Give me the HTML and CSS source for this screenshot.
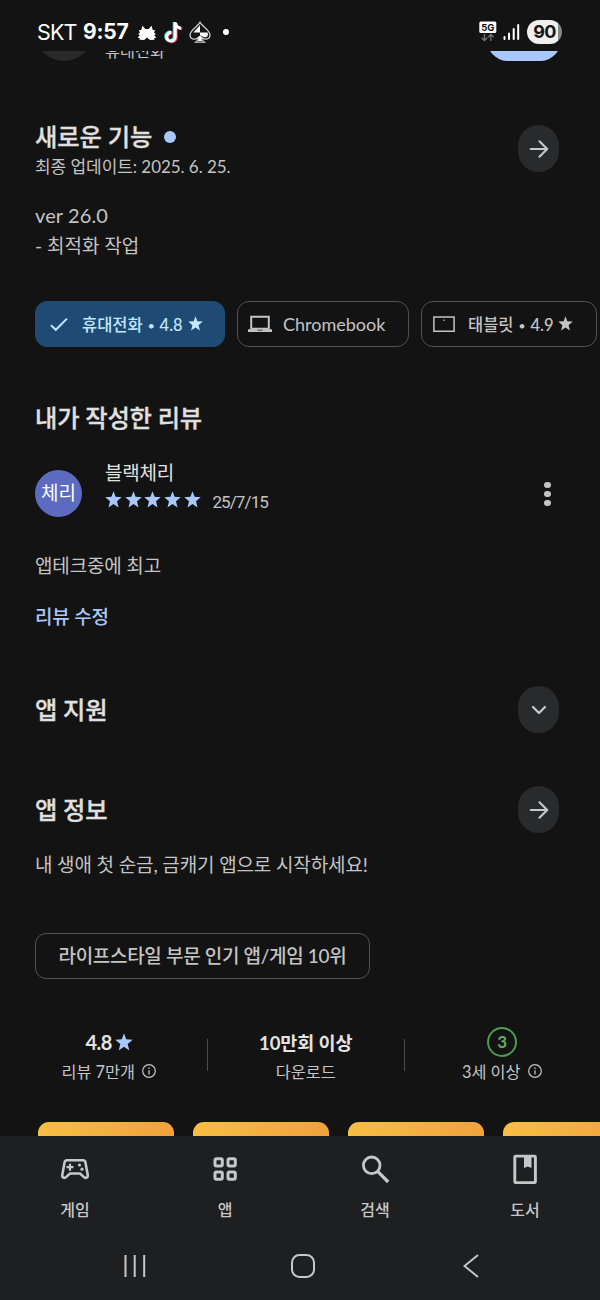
FILE: index.html
```html
<!DOCTYPE html>
<html lang="ko">
<head>
<meta charset="utf-8">
<title>앱 정보</title>
<link rel="stylesheet" href="styles.css">
</head>
<body>
<svg class="defs" width="0" height="0">
  <symbol id="star" viewBox="1 1 22 22"><path d="M12 17.800 18.500 22.300l-2-7.900L22.700 9.200l-8-.6L12 1.300 9.300 8.600l-8 .6 6.200 5.200-2 7.900z"/></symbol>
  <symbol id="arrow" viewBox="0 0 24 24"><path d="M3 12H20.500M12.500 3.600 21 12l-8.500 8.400"/></symbol>
  <symbol id="info" viewBox="0 0 16 16"><circle cx="8" cy="8" r="6.300" fill="none" stroke="currentColor" stroke-width="1.200"/><path d="M7.350 7.200h1.300v4.300h-1.300zM7.350 4.600h1.300V6h-1.300z" fill="currentColor"/></symbol>
</svg>
<header class="status">
  <span class="carrier">SKT</span>
  <span class="clock">9:57</span>
  <svg class="s-creature" width="20" height="16" viewBox="0 0 20 16"><path fill="#fff" d="M5.500.8 8.300 4h3.400L14.500.8l1.300 4.200 2.400.2-1.200 2.300 1.800 1.500-1.600 1.200 2.200 2.500-2.200.3.300 1.800-4.700.2L10 12.500 7.200 15l-4.700-.2.300-1.800-2.200-.3 2.200-2.500L1.200 9 3 7.500 1.800 5.200 4.200 5z"/></svg>
  <svg class="s-tiktok" width="21" height="23" viewBox="0 0 21 23"><g fill="none" stroke-width="3"><path stroke="#42d9d5" d="M11.200 1v14.300a4.300 4.300 0 1 1-3.800-4.200M11.400 2c.5 3 2.500 4.500 5.500 4.800"/><path stroke="#ef3b5a" d="M13.200 2v14.300a4.300 4.300 0 1 1-3.800-4.200M13.400 3c.5 3 2.500 4.500 5.800 4.800"/><path stroke="#fff" d="M12.200 1.200v14.500a4.300 4.300 0 1 1-3.900-4.200M12.300 2.300c.5 3 2.500 4.500 5.700 4.900"/></g></svg>
  <svg class="s-spade" width="22" height="23" viewBox="0 0 22 23"><path fill="#151515" stroke="#ccc" stroke-width="1.300" d="M11 1.200C9.300 5 1 8.900 1 14c0 4.500 5.800 5.500 8.600 2.300-.1 2.200-1.100 3.700-2.900 4.900h8.600c-1.800-1.200-2.800-2.700-2.900-4.900C15.200 19.500 21 18.500 21 14c0-5.100-8.300-9-10-12.800z"/><path fill="#fff" d="M11 4v7.500H4.500C6.500 8.500 9.500 6.500 11 4zM11 11.500h7.500c2 4-2.500 6.500-5.500 3.500l-2-.5zM10.300 15h1.400l1.200 5H9.100z"/></svg>
  <span class="s-dot"></span>
  <svg class="s-net" width="18" height="21" viewBox="0 0 18 21"><rect x=".3" y=".5" width="17" height="11.500" rx="1.500" fill="#fff"/><text class="net-label" x="8.800" y="10" text-anchor="middle">5G</text><path fill="none" stroke="#777" stroke-width="1.300" d="M5.500 13v6.500m-2.800-2.700 2.800 2.800 2.800-2.800M11.800 20v-6.500M9 16.200l2.800-2.800 2.800 2.800"/></svg>
  <svg class="s-signal" width="17" height="18" viewBox="0 0 17 18"><path stroke="#fff" stroke-width="2" stroke-linecap="round" d="M1.500 14v2M6 10.500V16M10.700 6v10M15.200 2v14"/></svg>
  <span class="battery">90</span>
</header>

<main>
  <div class="peek"><span class="peek-icon"></span><span class="peek-text">휴대전화</span><span class="peek-btn"></span></div>

  <section class="head news">
    <div>
      <h2>새로운 기능<i class="new-dot"></i></h2>
      <p class="updated">최종 업데이트: 2025. 6. 25.</p>
    </div>
    <span class="pill"><svg class="go" width="22" height="22"><use href="#arrow"/></svg></span>
  </section>
  <p class="notes"><span class="ver">ver 26.0</span><br>- 최적화 작업</p>

  <div class="chips">
    <span class="chip on"><svg width="20" height="20" viewBox="0 0 20 20"><path d="M2 11.200 6.800 15.800 18 4.600" fill="none" stroke="currentColor" stroke-width="2"/></svg><span class="t-phone">휴대전화 <span class="bul">•</span> 4.8</span><svg class="cs" width="15" height="15"><use href="#star"/></svg></span>
    <span class="chip cb"><svg width="24" height="20" viewBox="0 0 24 20"><path fill="none" stroke="currentColor" stroke-width="2" d="M3.200 2.800h17.600v12H3.200z"/><path fill="currentColor" d="M0 15.300h9l.7 1.200h4.600l.7-1.200h9v2.700H0z"/></svg><span class="t-cb">Chromebook</span></span>
    <span class="chip tb"><svg width="22" height="20" viewBox="0 0 22 20"><path fill="none" stroke="currentColor" stroke-width="1.500" d="M.9 3h20.200v14.200H.9z"/><circle cx="11" cy="6.300" r=".8" fill="currentColor"/></svg><span class="t-tb">태블릿 <span class="bul">•</span> 4.9</span><svg class="cs" width="15" height="15"><use href="#star"/></svg></span>
  </div>

  <h2 class="mine">내가 작성한 리뷰</h2>
  <div class="reviewer">
    <span class="avatar">체리</span>
    <div class="who">
      <p class="name">블랙체리</p>
      <div class="rate"><svg><use href="#star"/></svg><svg><use href="#star"/></svg><svg><use href="#star"/></svg><svg><use href="#star"/></svg><svg><use href="#star"/></svg><span>25/7/15</span></div>
    </div>
    <span class="more"><i></i><i></i><i></i></span>
  </div>
  <p class="comment">앱테크중에 최고</p>
  <p class="edit">리뷰 수정</p>

  <section class="head support"><h2>앱 지원</h2><span class="pill"><svg class="go" width="16" height="16" viewBox="0 0 16 16"><path d="M2 5l6 6 6-6"/></svg></span></section>
  <section class="head about"><h2>앱 정보</h2><span class="pill"><svg class="go" width="22" height="22"><use href="#arrow"/></svg></span></section>
  <p class="desc">내 생애 첫 순금, 금캐기 앱으로 시작하세요!</p>
  <span class="tag">라이프스타일 부문 인기 앱/게임 10위</span>

  <div class="stats">
    <div class="stat"><b class="score">4.8<svg class="bs" width="18" height="18"><use href="#star"/></svg></b><span>리뷰 7만개<svg class="info"><use href="#info"/></svg></span></div>
    <i class="sep"></i>
    <div class="stat"><b class="dl">10만회 이상</b><span>다운로드</span></div>
    <i class="sep"></i>
    <div class="stat"><b><em class="age">3</em></b><span>3세 이상<svg class="info"><use href="#info"/></svg></span></div>
  </div>
  <div class="shots"><i></i><i></i><i></i><i></i></div>
</main>

<footer>
  <nav class="tabs">
    <span><svg width="30" height="30" viewBox="0 0 30 30"><path fill="none" stroke="currentColor" stroke-width="2.600" stroke-linejoin="round" d="M7 6.200h16q2 0 2.400 2l2.300 12.500c.5 3-2.200 4.200-4 2.200L20 19.500H10l-3.700 3.400c-1.800 2-4.500.8-4-2.200L4.600 8.200q.4-2 2.400-2z"/><path stroke="currentColor" stroke-width="2.200" d="M10 9.700v7M6.500 13.200h7"/><g fill="currentColor"><circle cx="19.500" cy="11" r="1.600"/><circle cx="22" cy="15.200" r="1.600"/></g></svg>게임</span>
    <span><svg width="30" height="30" viewBox="0 0 30 30"><g fill="none" stroke="currentColor" stroke-width="3"><rect x="5" y="4.700" width="7.300" height="7.300" rx="1.500"/><rect x="18" y="4.700" width="7.300" height="7.300" rx="1.500"/><rect x="5" y="18" width="7.300" height="7.300" rx="1.500"/><rect x="18" y="18" width="7.300" height="7.300" rx="1.500"/></g></svg>앱</span>
    <span><svg width="30" height="30" viewBox="0 0 30 30"><circle cx="11.700" cy="11.300" r="8.300" fill="none" stroke="currentColor" stroke-width="2.800"/><path stroke="currentColor" stroke-width="3.200" d="M17.400 17.200 28.200 28"/></svg>검색</span>
    <span><svg width="30" height="30" viewBox="0 0 30 30"><rect x="4.800" y="2.100" width="20.600" height="26.500" rx="1" fill="none" stroke="currentColor" stroke-width="2.900"/><path fill="currentColor" d="M14 2h7.500v12L17.700 12.500 14 14z"/></svg>도서</span>
  </nav>
  <div class="sysnav">
    <span><svg width="26" height="26" viewBox="0 0 26 26"><path stroke="currentColor" stroke-width="2" d="M3.500 2v22M12.700 2v22M22.200 2v22"/></svg></span>
    <span><svg width="26" height="26" viewBox="0 0 26 26"><rect x="2" y="2" width="22" height="22" rx="7.500" fill="none" stroke="currentColor" stroke-width="2"/></svg></span>
    <span><svg width="26" height="26" viewBox="0 0 26 26"><path fill="none" stroke="currentColor" stroke-width="1.900" d="M20 2 6.500 13 20 24"/></svg></span>
  </div>
</footer>
</body>
</html>
```

FILE: styles.css
```css
* { box-sizing: border-box; margin: 0; padding: 0; }
body { width: 600px; height: 1300px; overflow: hidden; background: #131313; color: #c4c4c4; font-family: Lato, "Noto Sans CJK KR", sans-serif; font-size: 19px; display: flex; flex-direction: column; }
svg { display: block; flex: none; }
.defs { position: absolute; }
i, em { font-style: normal; display: block; }

.status { height: 51px; flex: none; display: flex; align-items: center; padding: 13px 38px 0 37px; color: #fff; }
.carrier { font: 400 21.500px/30px Inter, sans-serif; letter-spacing: -.9px; width: 46px; }
.clock { font: 700 21px/30px Inter, sans-serif; letter-spacing: -.2px; width: 54px; white-space: nowrap; }
.s-creature { margin-top: 1px; }
.s-tiktok { margin-left: 6px; }
.s-spade { margin-left: 5px; margin-top: 1px; }
.s-dot { width: 6px; height: 6px; border-radius: 3px; background: #fff; margin-left: 12px; }
.s-net { margin-left: auto; margin-top: -2px; }
.net-label { font: 700 9.500px Inter, sans-serif; fill: #111; }
.s-signal { margin-left: 6px; }
.battery { width: 35px; height: 24px; border-radius: 12px; margin-left: 7px; background: linear-gradient(90deg, #efefef 90%, #888 90%); color: #151515; font: 700 18px/24px Inter, sans-serif; letter-spacing: -.7px; text-align: center; }

main { height: 1085px; flex: none; overflow: hidden; padding-left: 35px; display: flex; flex-direction: column; align-items: flex-start; }
.peek { height: 10px; width: 565px; overflow: hidden; display: flex; align-items: flex-end; flex: none; }
.peek-icon { width: 58px; height: 58px; border-radius: 29px; background: #292929; flex: none; }
.peek-text { margin-left: 12px; font-size: 16.300px; line-height: 24px; margin-bottom: -2px; }
.peek-btn { width: 74px; height: 42px; border-radius: 21px; background: #a8c7fa; margin-left: auto; margin-right: 39px; flex: none; }

h2 { font-size: 24.300px; line-height: 28px; font-weight: 500; -webkit-text-stroke: .3px; color: #e0e0e0; white-space: nowrap; letter-spacing: -.2px; }
.head { width: 524px; display: flex; justify-content: space-between; align-items: center; flex: none; height: 47px; }
.news { height: 55px; margin-top: 62px; align-items: flex-start; }
.news h2 { display: flex; align-items: center; letter-spacing: -.1px; }
.new-dot { width: 12px; height: 12px; border-radius: 6px; background: #a8c7fa; margin-left: 12px; }
.updated { font-size: 17px; line-height: 24px; margin-top: 4px; white-space: nowrap; letter-spacing: -.05px; }
.pill { width: 41px; height: 47px; border-radius: 20.500px; background: #282a2b; display: grid; place-items: center; }
.news .pill { margin-top: 2px; }
.go { fill: none; stroke: #c8c8c8; stroke-width: 2.300; stroke-linecap: round; stroke-linejoin: round; }
.notes { margin-top: 23px; line-height: 29.500px; height: 59px; flex: none; }
.ver { font-size: 20px; letter-spacing: .1px; }

.chips { margin-top: 41px; display: flex; gap: 12px; flex: none; }
.chip { height: 46px; border: 1px solid #505252; border-radius: 12px; display: flex; align-items: center; flex: none; white-space: nowrap; font-size: 16.500px; font-weight: 500; padding-bottom: 1px; }
.chip.on { width: 190px; background: #1f4a73; border-color: #1f4a73; color: #c2e7ff; padding-left: 13px; }
.cb { width: 172px; padding-left: 10px; }
.tb { width: 176px; padding-left: 11px; }
.t-phone { margin-left: 13px; }
.t-cb { margin-left: 11px; font-size: 18px; font-weight: 400; }
.t-tb { margin-left: 13px; }
.bul { font-size: 12px; vertical-align: 1px; margin: 0 .8px; }
.cs { fill: currentColor; margin-left: 5px; }

.mine { margin-top: 57px; }
.reviewer { display: flex; width: 524px; margin-top: 26px; height: 60px; flex: none; }
.avatar { width: 47px; height: 47px; border-radius: 50%; background: #5c6bc0; color: #fff; font-size: 19px; line-height: 46px; text-align: center; margin-top: 12px; flex: none; }
.who { margin-left: 23px; }
.name { line-height: 28px; color: #e3e3e3; margin-top: 1px; letter-spacing: -.2px; }
.rate { display: flex; align-items: center; height: 26px; gap: 2.700px; }
.rate svg { width: 17px; height: 17px; fill: #a8c7fa; margin-top: -2px; }
.rate span { font-family: Roboto, sans-serif; font-size: 17px; margin-left: 9px; margin-top: 3px; letter-spacing: -.9px; }
.more { margin-left: auto; margin-right: 8.500px; margin-top: 24px; display: flex; flex-direction: column; gap: 2.500px; }
.more i { width: 6.400px; height: 6.400px; border-radius: 50%; background: #c4c4c4; }
.comment { margin-top: 34px; line-height: 28px; letter-spacing: -.15px; }
.edit { margin-top: 23px; line-height: 28px; color: #a8c7fa; font-weight: 500; letter-spacing: -.2px; }
.support { margin-top: 55px; }
.about { margin-top: 53px; }
.desc { margin-top: 18px; line-height: 28px; white-space: nowrap; letter-spacing: -.12px; }
.tag { margin-top: 54px; width: 335px; height: 46px; flex: none; border: 1px solid #505252; border-radius: 11px; text-align: center; line-height: 43px; white-space: nowrap; font-weight: 500; letter-spacing: -.32px; }

.stats { display: flex; margin-top: 48px; flex: none; height: 58px; margin-left: -24px; }
.stat { width: 196.500px; flex: none; display: flex; flex-direction: column; align-items: center; }
.stat b { height: 30px; display: flex; align-items: center; font-size: 18.500px; color: #e3e3e3; font-weight: 700; letter-spacing: -.1px; white-space: nowrap; }
.stat b.score { font-size: 20px; letter-spacing: -.5px; }
.stat > span { height: 28px; display: flex; align-items: center; font-size: 16.300px; white-space: nowrap; }
.bs { fill: #a8c7fa; margin-left: 3px; }
.info { width: 16px; height: 16px; margin-left: 6px; }
.sep { width: 1px; height: 32px; background: #4c4e4e; margin: 12px -.5px 0; flex: none; }
.age { width: 30px; height: 30px; border: 2px solid #4f9a4d; border-radius: 50%; color: #64ad60; font-size: 17px; line-height: 25px; text-align: center; }
.shots { display: flex; gap: 19px; margin: 37px 0 0 3px; flex: none; }
.shots i { width: 136px; height: 60px; border-radius: 11px; background: linear-gradient(100deg, #f7bf43, #f0a03c); flex: none; }

footer { height: 164px; background: #1e1f21; color: #c7c7c7; }
.tabs { display: flex; height: 96px; }
.tabs span { width: 150px; display: flex; flex-direction: column; align-items: center; padding-top: 18px; font-size: 16px; line-height: 24px; font-weight: 500; gap: 14px; }
.sysnav { display: flex; padding: 21px 0 0 51px; }
.sysnav span { width: 168px; display: flex; justify-content: center; }
```
